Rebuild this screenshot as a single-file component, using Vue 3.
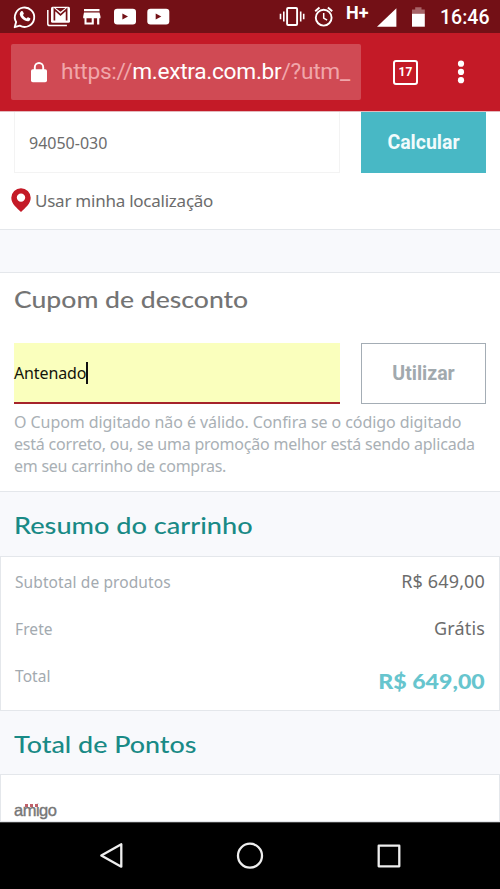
<script setup>
const rows = [
  { label: 'Subtotal de produtos', value: 'R$ 649,00' },
  { label: 'Frete', value: 'Grátis' },
]
</script>

<template>
  <div class="screen">
    <header class="status">
      <svg class="status-left" width="180" height="33" viewBox="0 0 180 33">
        <path d="M14.7 27.2l1.4-5.2a9.7 9.7 0 1 1 3.7 3.7z" fill="none" stroke="#fff" stroke-width="1.9" stroke-linejoin="round" />
        <path d="M21.2 11.2c.5-.5 1.4-.4 1.7.2l.9 2.1c.1.5-.6 1.2-.9 1.6.8 1.6 2 2.7 3.7 3.4.5-.5 1-1.3 1.5-1.2l2.1 1c.5.4-.1 1.9-.7 2.4-1.2.9-2.8.7-4.6-.1-2.3-1.1-4.3-3.3-5-5.6-.4-1.5.2-2.9 1.3-3.8z" fill="#fff" />
        <path d="M47.8 10v13.7q0 1.9 1.9 1.9h17.2" fill="none" stroke="#fff" stroke-width="1.5" />
        <rect x="51" y="6.8" width="19" height="16" rx="1.6" fill="#fff" />
        <path d="M54.4 20.6V9.4l6.1 5.4 6.1-5.4v11.2" fill="none" stroke="#731016" stroke-width="1.7" />
        <path d="M55.5 8h10l-5 3.8z" fill="#731016" />
        <path d="M84 9h15.5v2.2H84zM84 12.4h15.5l1 4.2v1.7h-1.2v6.3h-2.2v-6.3h-3.3v6.3h-9.3v-6.3h-1.3v-1.7zM86.5 18.3v4.2h5.2v-4.2z" fill="#fff" fill-rule="evenodd" />
        <g v-for="x in [114, 147.3]" :key="x" :transform="`translate(${x} 8.7)`">
          <rect width="22" height="15.8" rx="3.2" fill="#fff" />
          <path d="M8.4 4.8v6l5.6-3z" fill="#731016" />
        </g>
      </svg>
      <div class="status-right">
        <svg width="61" height="33" viewBox="278 0 61 33">
          <g fill="none" stroke="#fff">
            <rect x="287.1" y="8" width="10" height="17" rx="1" stroke-width="1.9" />
            <path d="M283.8 11.5v10M300.7 11.5v10M280.5 13.7v5.5M303.7 13.7v5.5" stroke-width="1.6" />
            <circle cx="323.7" cy="17.7" r="7.9" stroke-width="1.9" />
            <path d="M323.7 13v5.1l3.4 2.1" stroke-width="1.5" />
            <path d="M315.2 11.2l4.3-3.6M332.2 11.2l-4.3-3.6" stroke-width="2" />
          </g>
        </svg>
        <span class="network">H+</span>
        <svg width="60" height="33" viewBox="373 0 60 33">
          <path d="M396.4 8.3v18.4H377z" fill="#fff" />
          <path d="M412 14V9.4h3.2V7.3h6.3v2.1h3.3V14z" fill="#a76367" />
          <path d="M412 13.8h12.8v12.9H412z" fill="#fff" />
        </svg>
        <span class="clock">16:46</span>
      </div>
    </header>

    <div class="toolbar">
      <div class="address">
        <svg width="16" height="21" viewBox="0 0 16 21">
          <path d="M3.8 8V5.2a4.2 4.2 0 0 1 8.4 0V8" fill="none" stroke="#fff" stroke-width="1.9" />
          <rect y="7.2" width="16" height="13" rx="1.8" fill="#fff" />
        </svg>
        <span class="url">https://<b>m.extra.com.br</b>/?utm_</span>
      </div>
      <div class="tabs">17</div>
      <svg class="more" width="8" height="24" viewBox="0 0 8 24">
        <circle v-for="y in [3.7, 11.9, 20.2]" :key="y" cx="4" :cy="y" r="3.1" fill="#fff" />
      </svg>
    </div>

    <main class="page">
      <section class="shipping">
        <div class="form-row">
          <div class="field cep"><span>94050-030</span></div>
          <button class="btn primary">Calcular</button>
        </div>
        <div class="locate">
          <svg width="20" height="24" viewBox="0 0 20 24">
            <path d="M10 .2A9.7 9.7 0 0 0 .3 9.8C.3 16 6 20 10 24c4-4 9.7-8 9.7-14.2A9.7 9.7 0 0 0 10 .2zm0 5.2a4.2 4.2 0 1 1 0 8.4 4.2 4.2 0 0 1 0-8.4z" fill="#c41a27" fill-rule="evenodd" />
          </svg>
          <span>Usar minha localização</span>
        </div>
      </section>

      <section class="coupon">
        <h2 class="title gray"><span>Cupom de desconto</span></h2>
        <div class="form-row">
          <div class="field code"><span>Antenado</span><i class="caret"></i></div>
          <button class="btn outline">Utilizar</button>
        </div>
        <p class="error">
          <span class="l1">O Cupom digitado não é válido. Confira se o código digitado</span><br>
          <span class="l2">está correto, ou, se uma promoção melhor está sendo aplicada</span><br>
          <span class="l3">em seu carrinho de compras.</span>
        </p>
      </section>

      <h2 class="title band"><span class="t-sum">Resumo do carrinho</span></h2>
      <section class="card summary">
        <div v-for="r in rows" :key="r.label" class="line">
          <span class="label">{{ r.label }}</span>
          <span class="value">{{ r.value }}</span>
        </div>
        <div class="line">
          <span class="label">Total</span>
          <span class="total">R$ 649,00</span>
        </div>
      </section>

      <h2 class="title band pts"><span class="t-pts">Total de Pontos</span></h2>
      <section class="card points">
        <span class="amigo">amigo<i class="dots"></i></span>
      </section>
    </main>

    <nav class="navbar">
      <svg width="500" height="67" viewBox="0 0 500 67" fill="none" stroke="#eee" stroke-width="2.3" stroke-linejoin="round">
        <path d="M121.3 21.3v22.4l-20-11.2z" />
        <circle cx="250" cy="32.7" r="12" />
        <rect x="378.7" y="22.7" width="20.6" height="20.6" />
      </svg>
    </nav>
  </div>
</template>

<style>
body {
  margin: 0;
  background: #fff;
}
</style>

<style scoped>
.screen {
  width: 500px;
  height: 889px;
  overflow: hidden;
  display: flex;
  flex-direction: column;
  font-family: "Noto Sans", "Open Sans", sans-serif;
  color: #6c6c6c;
}
.screen * {
  box-sizing: border-box;
}
svg {
  display: block;
  flex: none;
}
.status {
  flex: none;
  height: 33px;
  background: #731016;
  color: #fff;
  display: flex;
  justify-content: space-between;
  font-family: Roboto, sans-serif;
}
.status-right {
  display: flex;
  width: 222px;
}
.network {
  width: 34px;
  padding-left: 7px;
  font-size: 18px;
  font-weight: 700;
  line-height: 25px;
  white-space: nowrap;
}
.clock {
  padding-left: 7px;
  font-size: 19.5px;
  font-weight: 500;
  line-height: 35px;
}
.toolbar {
  flex: none;
  height: 78px;
  background: #c41a27;
  display: flex;
  align-items: center;
  padding-left: 11px;
  font-family: Roboto, sans-serif;
  color: #fff;
}
.address {
  width: 350px;
  height: 56px;
  border-radius: 2px;
  background: #d04a54;
  display: flex;
  align-items: center;
  padding-left: 20px;
}
.url {
  margin-left: 14px;
  font-size: 22.7px;
  letter-spacing: -0.29px;
  line-height: 56px;
  color: #f0a6aa;
  white-space: nowrap;
}
.url b {
  font-weight: 400;
  color: #fff;
}
.tabs {
  width: 25px;
  height: 25px;
  margin-left: 32px;
  border: 2.5px solid #fff;
  border-radius: 3px;
  font-size: 12px;
  font-weight: 700;
  line-height: 21px;
  text-align: center;
}
.more {
  margin-left: 39px;
}
.page {
  flex: none;
  height: 711px;
  overflow: hidden;
  background: #f8f9fc;
  border-top: 1px solid #e3b9bd;
}
.shipping {
  height: 118px;
  background: #fff;
  border-bottom: 1px solid #e4e7eb;
}
.form-row {
  display: flex;
  justify-content: space-between;
  padding: 0 14px;
}
.field {
  width: 326px;
  height: 61px;
  display: flex;
  align-items: center;
}
.cep {
  border: 1px solid #f3f3f3;
  border-top: 0;
  padding: 1px 0 0 14px;
  font-size: 16px;
}
.btn {
  width: 125px;
  height: 61px;
  padding: 0;
  border: 0;
  border-radius: 0;
  font-family: Roboto, sans-serif;
  font-weight: 700;
  font-size: 19.5px;
  line-height: 58px;
}
.primary {
  background: #48b8c5;
  color: #f1fbfc;
  line-height: 61px;
}
.outline {
  background: #fff;
  color: #a1a9ae;
  border: 1px solid #a4adb5;
}
.locate {
  display: flex;
  align-items: center;
  gap: 4px;
  padding: 14px 0 0 11px;
  height: 40px;
  font-size: 17px;
  letter-spacing: -0.24px;
}
.coupon {
  margin-top: 42px;
  height: 220px;
  background: #fff;
  border-top: 1px solid #e4e7eb;
  border-bottom: 1px solid #e4e7eb;
}
.title {
  margin: 0;
  padding-left: 14px;
  font-family: Lato, sans-serif;
  font-weight: 500;
  font-size: 23px;
  color: #198a86;
  white-space: nowrap;
}
.title span {
  display: inline-block;
  transform: scaleX(1.155);
  transform-origin: 0 50%;
}
.title .t-sum {
  transform: scaleX(1.18);
}
.title .t-pts {
  transform: scaleX(1.168);
}
.gray {
  height: 70px;
  line-height: 53px;
  color: #747474;
}
.band {
  height: 64px;
  line-height: 66px;
}
.pts {
  height: 63px;
}
.code {
  height: 61px;
  background: #faffbd;
  border-bottom: 2px solid #a5242b;
  color: #14140a;
  font-size: 16px;
  letter-spacing: -0.12px;
}
.caret {
  width: 1.5px;
  height: 22px;
  background: #111;
}
.error {
  margin: 0;
  padding: 7px 0 0 14px;
  font-size: 16px;
  line-height: 22px;
  color: #a9b0b5;
  white-space: nowrap;
}
.l1 {
  letter-spacing: -0.07px;
}
.l2 {
  letter-spacing: -0.21px;
}
.l3 {
  letter-spacing: -0.25px;
}
.card {
  background: #fff;
  border: 1px solid #e4e7eb;
}
.summary {
  height: 155px;
  padding: 1px 14px 0;
}
.line {
  height: 47px;
  display: flex;
  justify-content: space-between;
  line-height: 48px;
}
.label {
  font-size: 15.5px;
  letter-spacing: 0.1px;
  color: #a3aab0;
}
.value {
  font-size: 18px;
  letter-spacing: 0.15px;
  line-height: 46px;
}
.total {
  font-family: Lato, sans-serif;
  font-weight: 900;
  font-size: 21px;
  line-height: 58px;
  color: #67c5ce;
  transform: scaleX(1.1);
  transform-origin: 100% 50%;
}
.points {
  height: 48px;
  padding: 25px 13px 0;
}
.amigo {
  position: relative;
  display: block;
  width: max-content;
  font-family: "Liberation Sans", sans-serif;
  font-size: 16.5px;
  line-height: 20px;
  letter-spacing: -0.5px;
  color: #777;
  -webkit-text-stroke: 0.4px #777;
}
.dots {
  position: absolute;
  left: 11px;
  top: 4px;
  width: 14px;
  height: 3px;
  background: repeating-linear-gradient(90deg, #c0616a 0 3px, #fff 3px 5px);
}
.navbar {
  flex: none;
  height: 67px;
  background: #000;
  border-top: 1px solid #444;
}
</style>
